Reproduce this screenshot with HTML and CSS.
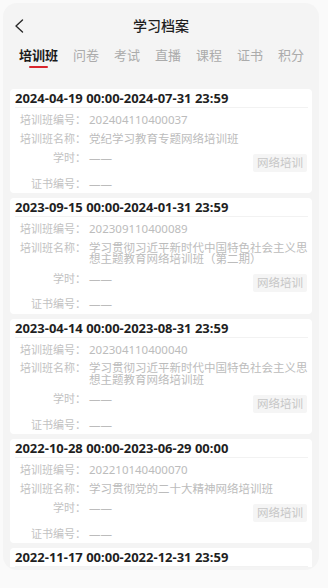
FILE: index.html
```html
<!DOCTYPE html>
<html lang="zh-CN">
<head>
<meta charset="utf-8">
<title>学习档案</title>
<link rel="stylesheet" href="styles.css">
</head>
<body>
<div class="frame">
  <header class="nav">
    <div class="nav-left">
      <svg class="back" width="10" height="14" viewBox="0 0 10 14"><polyline points="8.5,1 2,7 8.5,13" fill="none" stroke="#2a2a2a" stroke-width="1.4" stroke-linecap="round" stroke-linejoin="round"/></svg>
    </div>
    <div class="nav-title">学习档案</div>
    <div class="nav-right"></div>
  </header>
  <nav class="tabs">
    <div class="tab active">培训班</div>
    <div class="tab">问卷</div>
    <div class="tab">考试</div>
    <div class="tab">直播</div>
    <div class="tab">课程</div>
    <div class="tab">证书</div>
    <div class="tab">积分</div>
  </nav>
  <main class="list">
    <section class="card">
      <div class="card-title">2024-04-19 00:00-2024-07-31 23:59</div>
      <div class="card-body">
        <div class="row"><span class="label">培训班编号：</span><span class="value">202404110400037</span></div>
        <div class="row"><span class="label">培训班名称：</span><span class="value">党纪学习教育专题网络培训班</span></div>
        <div class="row row-hours"><span class="label">学时：</span><span class="value">——</span><span class="tag">网络培训</span></div>
        <div class="row row-cert"><span class="label">证书编号：</span><span class="value">——</span></div>
      </div>
    </section>
    <section class="card">
      <div class="card-title">2023-09-15 00:00-2024-01-31 23:59</div>
      <div class="card-body">
        <div class="row"><span class="label">培训班编号：</span><span class="value">202309110400089</span></div>
        <div class="row"><span class="label">培训班名称：</span><span class="value">学习贯彻习近平新时代中国特色社会主义思想主题教育网络培训班（第二期）</span></div>
        <div class="row row-hours"><span class="label">学时：</span><span class="value">——</span><span class="tag">网络培训</span></div>
        <div class="row row-cert"><span class="label">证书编号：</span><span class="value">——</span></div>
      </div>
    </section>
    <section class="card">
      <div class="card-title">2023-04-14 00:00-2023-08-31 23:59</div>
      <div class="card-body">
        <div class="row"><span class="label">培训班编号：</span><span class="value">202304110400040</span></div>
        <div class="row"><span class="label">培训班名称：</span><span class="value">学习贯彻习近平新时代中国特色社会主义思想主题教育网络培训班</span></div>
        <div class="row row-hours"><span class="label">学时：</span><span class="value">——</span><span class="tag">网络培训</span></div>
        <div class="row row-cert"><span class="label">证书编号：</span><span class="value">——</span></div>
      </div>
    </section>
    <section class="card">
      <div class="card-title">2022-10-28 00:00-2023-06-29 00:00</div>
      <div class="card-body">
        <div class="row"><span class="label">培训班编号：</span><span class="value">202210140400070</span></div>
        <div class="row"><span class="label">培训班名称：</span><span class="value">学习贯彻党的二十大精神网络培训班</span></div>
        <div class="row row-hours"><span class="label">学时：</span><span class="value">——</span><span class="tag">网络培训</span></div>
        <div class="row row-cert"><span class="label">证书编号：</span><span class="value">——</span></div>
      </div>
    </section>
    <section class="card card-partial">
      <div class="card-title">2022-11-17 00:00-2022-12-31 23:59</div>
    </section>
  </main>
</div>
</body>
</html>
```
FILE: styles.css
```css
html, body {
  margin: 0;
  padding: 0;
}
body {
  background: #fafafa;
  font-family: "Noto Sans", "Noto Sans CJK SC", sans-serif;
  color: #222;
}
.frame {
  margin: 3px 9px 0 3px;
  height: 567px;
  box-sizing: border-box;
  padding-bottom: 3px;
  background: #f4f4f4;
  border-radius: 14px;
  overflow: hidden;
  display: flex;
  flex-direction: column;
}
.nav {
  height: 45px;
  flex: none;
  display: grid;
  grid-template-columns: 1fr auto 1fr;
  align-items: center;
}
.nav-left {
  padding-left: 11px;
  display: flex;
  align-items: center;
}
.back {
  display: block;
}
.nav-title {
  font-size: 14px;
  font-weight: 500;
  color: #1e1e1e;
  line-height: 18px;
}
.tabs {
  flex: none;
  display: flex;
  gap: 15px;
  padding-left: 16px;
  align-items: flex-start;
}
.tab {
  display: flex;
  flex-direction: column;
  align-items: center;
  font-size: 13px;
  line-height: 15px;
  color: #ababab;
}
.tab.active {
  color: #1a1a1a;
  font-weight: 700;
}
.tab.active::after {
  content: "";
  width: 19px;
  height: 2.5px;
  margin-top: 2.5px;
  border-radius: 2px;
  background: #d9252c;
}
.list {
  flex: 1;
  min-height: 0;
  overflow: hidden;
  padding: 21px 7px 0;
  display: flex;
  flex-direction: column;
  gap: 5px;
}
.card {
  flex: none;
  background: #ffffff;
  border-radius: 4px;
  padding: 0 4px 4px 5px;
}
.card-partial {
  height: 100px;
}
.card-title {
  font-size: 13px;
  font-weight: 700;
  line-height: 18px;
  color: #1f1f1f;
  border-bottom: 1px solid #f2f2f2;
  white-space: nowrap;
}
.card-body {
  padding-top: 6px;
}
.row {
  display: flex;
  align-items: flex-start;
  font-size: 11.5px;
  line-height: 11.5px;
  color: #bcbcbc;
}
.row + .row {
  margin-top: 7px;
}
.row.row-hours {
  margin-top: 8px;
}
.row.row-cert {
  margin-top: 6px;
}
.label {
  flex: none;
  width: 71px;
  margin-right: 3px;
  text-align: right;
  font-size: 11px;
  color: #c2c2c2;
}
.value {
  flex: 1;
  min-width: 0;
}
.tag {
  flex: none;
  margin-top: 1.5px;
  margin-right: 1px;
  height: 18px;
  line-height: 18px;
  padding: 0 4px;
  background: #f5f5f5;
  color: #c6c6c6;
  border-radius: 2px;
}
```
